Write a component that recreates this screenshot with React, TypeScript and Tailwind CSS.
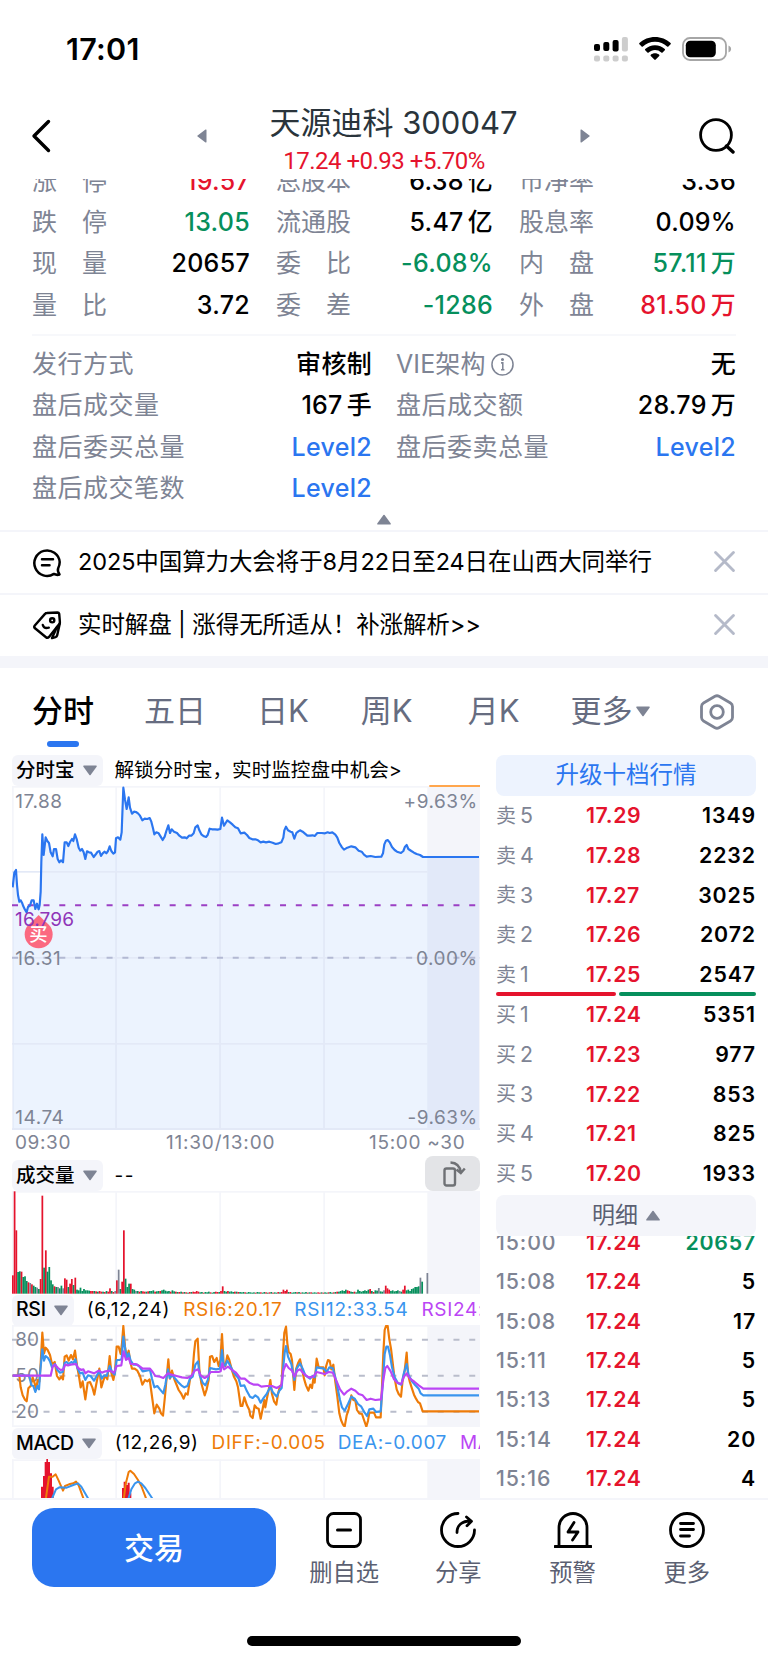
import React from "react";
import clsx from "clsx";

const RED = "#e5132d";
const GREEN = "#068f5c";
const GREY = "#7e8494";

type Cell = { label: string; value: string; tone?: string };

const quotes: Cell[] = [
    { label: "涨停", value: "19.57", tone: "text-[#e5132d]" },
    { label: "总股本", value: "6.38亿" },
    { label: "市净率", value: "3.36" },
    { label: "跌停", value: "13.05", tone: "text-[#068f5c]" },
    { label: "流通股", value: "5.47亿" },
    { label: "股息率", value: "0.09%" },
    { label: "现量", value: "20657" },
    { label: "委比", value: "-6.08%", tone: "text-[#068f5c]" },
    { label: "内盘", value: "57.11万", tone: "text-[#068f5c]" },
    { label: "量比", value: "3.72" },
    { label: "委差", value: "-1286", tone: "text-[#068f5c]" },
    { label: "外盘", value: "81.50万", tone: "text-[#e5132d]" },
];

const extras: Cell[] = [
    { label: "发行方式", value: "审核制" },
    { label: "VIE架构", value: "无" },
    { label: "盘后成交量", value: "167手" },
    { label: "盘后成交额", value: "28.79万" },
    { label: "盘后委买总量", value: "Level2", tone: "text-[#2b76f0]" },
    { label: "盘后委卖总量", value: "Level2", tone: "text-[#2b76f0]" },
    { label: "盘后成交笔数", value: "Level2", tone: "text-[#2b76f0]" },
];

const asks = [
    ["卖", "5", "17.29", "1349"],
    ["卖", "4", "17.28", "2232"],
    ["卖", "3", "17.27", "3025"],
    ["卖", "2", "17.26", "2072"],
    ["卖", "1", "17.25", "2547"],
];

const bids = [
    ["买", "1", "17.24", "5351"],
    ["买", "2", "17.23", "977"],
    ["买", "3", "17.22", "853"],
    ["买", "4", "17.21", "825"],
    ["买", "5", "17.20", "1933"],
];

const trades = [
    ["15:00", "17.24", "20657"],
    ["15:08", "17.24", "5"],
    ["15:08", "17.24", "17"],
    ["15:11", "17.24", "5"],
    ["15:13", "17.24", "5"],
    ["15:14", "17.24", "20"],
    ["15:16", "17.24", "4"],
];

// Chart series use a grid of three units per pixel.
const pricePath =
    "38,427 43,383 48,375 51,420 54,450 58,470 62,466 66,473 70,484 75,494 80,502 84,486 90,482 95,466 101,466 106,492 111,476 116,493 119,480 122,440 124,350 127,268 131,330 137,277 142,288 147,294 152,322 158,334 162,312 168,312 173,342 178,352 183,346 189,352 194,292 200,292 205,303 210,291 216,282 220,288 225,268 230,282 236,308 241,317 246,312 251,322 256,342 261,319 267,322 273,323 281,336 288,327 293,320 298,318 303,333 308,325 314,320 319,325 324,318 329,304 334,318 340,326 345,322 348,280 354,277 361,284 365,262 370,128 375,164 380,192 386,157 390,188 396,206 402,200 408,201 414,205 420,212 427,226 434,221 442,222 449,219 454,230 459,250 463,268 469,262 476,265 482,275 488,285 494,275 499,258 505,241 510,264 515,253 522,260 531,264 538,272 546,278 554,277 560,280 567,272 574,272 581,265 586,247 593,241 598,256 604,268 612,274 618,276 623,270 629,251 636,253 645,253 653,254 661,252 666,218 672,242 677,234 682,226 690,232 698,239 706,247 714,250 722,265 733,263 741,270 748,279 757,283 766,283 774,286 782,292 790,290 798,292 808,290 818,293 827,297 836,295 844,292 850,278 853,256 858,245 864,256 872,260 877,262 883,281 889,264 895,259 900,256 908,260 914,265 922,272 930,272 938,271 944,273 952,264 965,264 975,265 983,262 989,264 997,262 1006,269 1012,278 1018,294 1026,307 1032,314 1042,308 1054,304 1066,307 1076,317 1085,320 1092,329 1100,335 1112,333 1126,336 1144,335 1149,325 1153,298 1158,287 1163,285 1169,292 1176,306 1184,315 1191,320 1203,324 1210,318 1215,305 1220,300 1225,312 1234,318 1242,323 1250,327 1260,330 1269,336 1437,336";

const rsi6 =
    "38,227 58,227 62,262 68,286 75,299 80,304 85,265 92,258 98,232 104,250 108,270 113,240 118,245 122,190 127,98 132,160 137,143 143,150 150,165 156,192 164,186 171,228 178,238 184,230 189,238 194,170 200,166 206,182 213,165 219,178 225,152 231,196 237,230 242,262 248,244 256,298 263,248 270,246 277,262 283,284 290,246 298,206 304,262 310,242 316,226 322,238 329,168 334,218 340,240 345,215 350,140 356,140 362,162 366,130 370,78 375,140 380,172 386,152 391,186 396,206 404,206 412,212 420,228 427,254 435,240 442,244 449,238 455,282 463,340 470,314 478,326 483,340 489,347 495,288 500,232 505,178 510,236 516,212 523,238 530,255 536,270 543,280 551,296 557,280 563,284 570,238 577,224 582,160 586,124 593,116 598,208 604,250 609,268 614,286 620,268 626,240 630,170 636,168 643,186 650,174 656,198 661,180 666,102 671,194 676,198 682,166 688,180 695,208 702,230 709,244 714,262 722,318 727,318 733,292 741,316 748,330 751,347 758,354 764,316 770,324 776,326 782,356 788,326 793,300 796,322 801,294 806,270 811,240 816,282 822,304 829,314 834,282 840,258 845,254 849,160 853,98 858,80 862,130 866,156 872,162 876,180 883,270 888,208 894,190 900,178 906,206 912,236 918,256 925,272 931,254 936,264 940,236 944,248 950,176 956,202 970,202 974,226 978,200 984,180 989,182 994,208 1000,194 1006,246 1012,290 1018,340 1023,360 1029,374 1034,380 1040,346 1046,328 1054,286 1060,300 1066,302 1071,330 1078,340 1086,342 1092,360 1099,380 1104,362 1108,338 1122,338 1128,352 1142,352 1146,260 1150,160 1154,90 1158,78 1163,78 1168,118 1173,146 1177,180 1183,230 1190,268 1196,282 1203,290 1208,240 1214,212 1220,158 1224,222 1229,244 1236,266 1242,284 1248,296 1254,306 1260,310 1268,334 1437,334";

const rsi12 =
    "38,227 88,227 94,256 100,258 106,276 112,258 117,268 121,212 127,148 132,182 137,168 144,174 150,184 156,202 165,192 172,210 180,218 188,216 194,188 200,186 206,192 214,186 220,190 226,178 232,204 240,220 248,218 256,240 264,226 272,228 282,242 290,228 298,212 305,236 312,226 320,228 329,198 336,216 344,224 350,180 358,180 365,178 370,110 376,150 381,176 386,160 392,182 400,194 412,194 420,202 428,214 450,210 456,236 463,262 472,258 480,268 490,280 496,254 504,208 509,234 517,226 526,236 534,246 544,256 553,262 562,258 570,236 578,230 586,194 594,184 599,226 608,248 616,256 624,238 630,204 638,206 648,208 660,206 666,150 671,198 676,196 682,182 690,196 700,216 710,228 716,236 722,258 733,256 741,274 750,290 758,294 766,286 774,292 782,308 792,292 800,282 811,260 818,276 830,290 838,272 845,264 850,200 854,158 858,138 864,170 874,192 883,240 890,206 900,190 908,206 916,226 930,236 938,228 944,232 950,202 972,206 980,216 988,202 998,204 1006,232 1014,270 1020,300 1026,322 1034,332 1044,312 1054,290 1064,296 1074,312 1084,320 1094,338 1101,348 1108,328 1120,326 1128,336 1142,334 1148,256 1154,162 1159,140 1164,140 1170,166 1176,202 1184,232 1194,250 1204,254 1212,218 1220,192 1226,226 1236,244 1246,256 1256,266 1262,280 1270,286 1437,286";

const rsi24 =
    "38,227 152,227 158,200 165,194 174,204 182,210 190,208 196,194 204,196 212,194 228,192 234,204 244,210 250,208 256,220 264,214 282,220 296,212 306,218 316,214 330,212 342,218 350,198 364,196 368,170 371,154 378,180 386,174 392,192 406,192 418,198 428,206 450,206 458,216 466,228 480,230 490,234 504,220 514,224 530,228 546,232 562,234 574,228 584,212 594,208 602,226 614,234 624,228 632,216 656,216 662,214 667,190 672,208 684,200 696,210 708,218 722,236 734,236 748,248 762,254 774,254 784,260 800,258 816,258 830,264 844,256 850,212 858,192 866,204 876,212 883,230 892,212 900,208 912,222 926,232 940,230 950,216 974,222 986,216 998,218 1010,244 1020,268 1032,284 1042,274 1054,266 1066,272 1076,282 1088,286 1100,300 1112,296 1126,300 1143,298 1150,240 1156,204 1162,198 1172,214 1182,238 1192,248 1204,252 1212,230 1220,220 1230,236 1244,246 1256,256 1270,266 1437,266";

// One entry per minute: colour key + height.
const volumes =
    "r55 r307 r190 g65 g67 r66 g50 g52 g38 r34 n32 r28 g24 g20 n18 g14 r44 r294 g78 r130 g66 g80 g40 g28 r22 g20 n20 g16 g24 n16 r46 r42 g20 r30 r44 g26 r48 g12 g10 g18 g8 g14 g10 g10 g9 r8 r8 g8 r7 g6 r8 r6 g6 r5 g8 r6 r16 g8 r5 n8 r40 n72 g14 r36 r190 g45 g20 g30 r30 g14 g12 n8 g8 r6 g8 r7 r6 g6 r7 g8 g8 g10 r6 g7 g8 r8 g10 g12 g9 g7 g8 r6 g10 g7 r6 g5 r5 g6 r4 g5 r4 g3 r5 g5 r6 r5 r8 r6 g4 g5 r3 g5 g4 g6 r4 g3 g5 r6 r5 g5 r8 r22 g8 g6 r8 g6 g7 g5 r6 g6 r5 g5 g4 g5 r4 g3 g5 g4 g3 g4 r3 g5 g4 r4 g3 g5 r4 g3 r4 g5 r3 g4 g3 r5 g4 r5 r12 r8 r12 g5 r5 g3 g4 g5 r4 g5 r3 g4 g3 g5 r3 g4 r4 g3 g4 g3 r4 r3 g4 r3 g4 g3 r4 g5 g3 r4 g5 r6 g6 g8 g10 g8 g12 r10 r8 g6 g5 r6 g4 g12 g8 g6 g8 g10 g8 g12 r14 g8 r5 g10 g9 n17 g7 g6 n10 r24 r16 r12 g8 g10 g7 g8 g10 n8 g6 r12 r24 g10 g12 g8 g14 g16 g20 g20 g22 n48 g36 n0 n0 n62".split(
        " "
    );

function Tri({ className }: { className?: string }) {
    return (
        <svg viewBox="0 0 14 11" className={clsx("h-[11px] w-[14px]", className)} fill={GREY}>
            <path d="M1 .5h12a.8.8 0 0 1 .6 1.200L7.600 10a.8.8 0 0 1-1.200 0L.4 1.700A.8.8 0 0 1 1 .5z" />
        </svg>
    );
}

function StatusBar() {
    return (
        <div className="flex h-[98px] items-center justify-between pl-[66px] pr-9">
            <span className="text-[30.500px] font-semibold leading-none tracking-[0.3px]">17:01</span>
            <div className="flex items-center gap-[11px]">
                <svg viewBox="0 0 34 26" className="h-[26px] w-[34px]">
                    <rect x="0" y="8" width="6" height="7" rx="2" />
                    <rect x="9.300" y="6" width="6" height="9" rx="2" />
                    <rect x="18.600" y="4" width="6" height="11.500" rx="2" />
                    <rect x="27.900" y="1" width="6" height="14.500" rx="2" fill="#cdcdcd" />
                    {[0, 9.3, 18.6, 27.9].map((x) => (
                        <rect key={x} x={x} y="19.500" width="6" height="6" rx="2" fill="#cdcdcd" />
                    ))}
                </svg>
                <svg viewBox="0 0 32 24" className="h-6 w-8">
                    <path d="M16 0c6 0 11.500 2.300 15.600 6 .4.4.4.9 0 1.300l-2.200 2.200c-.4.4-.9.4-1.300 0A17.500 17.500 0 0 0 16 4.800 17.500 17.500 0 0 0 3.900 9.500c-.4.4-.9.4-1.300 0L.4 7.300C0 6.900 0 6.400.4 6 4.500 2.300 10 0 16 0z" />
                    <path d="M16 8.200c3.800 0 7.200 1.400 9.800 3.800.4.4.4.9 0 1.300l-2.200 2.200c-.4.4-.9.4-1.300 0A9.500 9.500 0 0 0 16 13.100c-2.400 0-4.600.9-6.300 2.400-.4.4-.9.4-1.300 0l-2.200-2.200c-.4-.4-.4-.9 0-1.300A14.300 14.300 0 0 1 16 8.200z" />
                    <path d="M16 16.200c1.600 0 3 .5 4.200 1.500.4.4.4.9 0 1.300l-3.500 3.600c-.4.4-1 .4-1.400 0L11.800 19c-.4-.4-.4-.9 0-1.300 1.200-1 2.600-1.500 4.200-1.500z" />
                </svg>
                <svg viewBox="0 0 50 24" className="h-6 w-[50px]">
                    <rect x="1" y="1" width="43" height="22" rx="7" fill="none" stroke="#a6a6a6" strokeWidth="1.800" />
                    <rect x="3.800" y="3.800" width="30" height="16.400" rx="4.500" />
                    <path d="M46.500 8.500c1.800.7 2.600 2 2.600 3.500s-.8 2.800-2.600 3.500z" fill="#a6a6a6" />
                </svg>
            </div>
        </div>
    );
}

function Header() {
    return (
        <div className="flex h-[81px] items-center pl-[31px] pr-[33px]">
            <svg viewBox="0 0 20 34" className="mt-[-5px] h-[34px] w-5" fill="none" stroke="#000" strokeWidth="3.400" strokeLinecap="round" strokeLinejoin="round">
                <path d="M17.500 2.500 3 17l14.500 14.500" />
            </svg>
            <svg viewBox="0 0 10 14" className="ml-[146px] mt-[-5px] h-[14px] w-[10px]" fill={GREY}>
                <path d="M9.500 1v12a.6.6 0 0 1-1 .4L.6 7.600a.8.8 0 0 1 0-1.200L8.500.6a.6.6 0 0 1 1 .4z" />
            </svg>
            <div className="flex flex-1 flex-col items-center">
                <div className="mt-[4px] whitespace-nowrap text-[31px] leading-[40px] text-[#2a343b]">天源迪科 300047</div>
                <div className="mr-[19px] whitespace-nowrap font-[Roboto] text-[24px] leading-[36px] tracking-[-0.5px] text-[#e5132d]">
                    17.24 +0.93 +5.70%
                </div>
            </div>
            <svg viewBox="0 0 10 14" className="mr-[109px] mt-[-5px] h-[14px] w-[10px]" fill={GREY}>
                <path d="M.5 1v12a.6.6 0 0 0 1 .4l7.900-5.800a.8.8 0 0 0 0-1.200L1.500.6a.6.6 0 0 0-1 .4z" />
            </svg>
            <svg viewBox="0 0 36 36" className="mt-[-5px] size-9" fill="none" stroke="#000" strokeWidth="2.800" strokeLinecap="round">
                <circle cx="17" cy="17" r="15.400" />
                <path d="m27.500 28 6.500 6" strokeWidth="3.400" />
            </svg>
        </div>
    );
}

// Splits a trailing CJK unit off the number so it gets its own gap.
function Value({ cell }: { cell: Cell }) {
    const unit = cell.value.match(/^([\d.]+)([^\d.%]+)$/);
    return (
        <span className={clsx("flex items-center gap-[4px] font-medium tracking-[0.3px]", cell.tone)}>
            {unit ? (
                <>
                    <span>{unit[1]}</span>
                    <span>{unit[2]}</span>
                </>
            ) : (
                cell.value
            )}
        </span>
    );
}

function Stats() {
    return (
        <div className="h-[353px] overflow-hidden border-b-2 border-[#f4f5fa] px-8">
            <div className="mt-[-18px] grid grid-cols-[218px_217px_217px] gap-x-[26px]">
                {quotes.map((q) => (
                    <div key={q.label} className="flex h-[41.300px] items-center justify-between text-[25px]">
                        <span className="flex w-[75px] justify-between text-[#7e8494]">
                            {q.label.split("").map((ch) => (
                                <span key={ch}>{ch}</span>
                            ))}
                        </span>
                        <Value cell={q} />
                    </div>
                ))}
            </div>
            <div className="mt-[8px] h-[2px] bg-[#f7f8fb]" />
            <div className="mt-[8px] grid grid-cols-2 gap-x-[24px]">
                {extras.map((q) => (
                    <div key={q.label} className="flex h-[41.300px] items-center justify-between text-[25px]">
                        <span className="flex items-center gap-[5px] tracking-[0.5px] text-[#7e8494]">
                            {q.label === "VIE架构" ? <span className="tracking-[0.1px]">{q.label}</span> : q.label}
                            {q.label === "VIE架构" && (
                                <svg viewBox="0 0 24 24" className="size-[23px]" fill="none" stroke={GREY} strokeWidth="1.600">
                                    <circle cx="12" cy="12" r="11" />
                                    <path d="M10.500 10.300H12.300V17.500M10.500 17.500h3.500" />
                                    <circle cx="12" cy="6.800" r=".8" fill={GREY} />
                                </svg>
                            )}
                        </span>
                        <Value cell={q} />
                    </div>
                ))}
            </div>
            <Tri className="mx-auto mt-[5px] rotate-180" />
        </div>
    );
}

function Notice({ icon, text }: { icon: React.ReactNode; text: string }) {
    return (
        <div className="flex h-[61px] items-center px-[33px] pb-[2px]">
            {icon}
            <span className="ml-[17px] flex-1 whitespace-nowrap text-[23.500px] tracking-[-0.1px]">{text}</span>
            <svg viewBox="0 0 20 20" className="size-[21px]" fill="none" stroke="#b5bac9" strokeWidth="2.700" strokeLinecap="round">
                <path d="m1.500 1.500 17 17M18.500 1.500l-17 17" />
            </svg>
        </div>
    );
}

function Notices() {
    return (
        <div className="border-b-[12px] border-[#f4f5fa]">
            <Notice
                text="2025中国算力大会将于8月22日至24日在山西大同举行"
                icon={
                    <svg viewBox="0 0 28 28" className="size-7 overflow-visible" fill="none" stroke="#000" strokeWidth="2.500" strokeLinecap="round" strokeLinejoin="round">
                        <path d="M26.500 26.500c-2 .7-4 .3-5.600-.6A12.700 12.700 0 1 1 26.700 14c0 2.400-.6 4.300-1.500 6.200-.8 1.700-.6 3.200 1.300 6.300z" />
                        <path d="M9 11.300h11M9 17.200h7.500" />
                    </svg>
                }
            />
            <div className="h-[2px] bg-[#f4f5fa]" />
            <Notice
                text="实时解盘 | 涨得无所适从！补涨解析>>"
                icon={
                    <svg viewBox="0 0 28 28" className="size-7 overflow-visible" fill="none" stroke="#000" strokeWidth="2.400" strokeLinecap="round" strokeLinejoin="round">
                        <path d="M13.800 2 24.500 1.500c1 0 1.500.5 1.700 1.300l.7 8.400c0 .8-.2 1.300-.6 1.800L16 25.900c-.9 1-2 1.100-3 .3L2 17.300c-.9-.8-1-1.800-.2-2.800L12 2.900c.5-.6 1.100-.9 1.800-.9z" />
                        <path d="m26.800 12.500-2.600 11.800c-.2.9-.8 1.500-1.700 1.800l-3.500 1 5-11" />
                        <circle cx="19.200" cy="9.300" r="2.100" />
                        <path d="M9.800 14c.8 2.600 3.200 3.500 6 2.700" />
                    </svg>
                }
            />
        </div>
    );
}

function Tabs() {
    return (
        <div className="flex h-[87px] items-center pl-8 pr-[34px] text-[31px] text-[#666c80]">
            <div className="flex flex-1 gap-[51px] whitespace-nowrap">
                <span className="relative -mr-px font-medium text-black">
                    分时
                    <span className="absolute bottom-[-12px] left-[15px] h-[6px] w-8 rounded-full bg-[#2b76f0]" />
                </span>
                <span>五日</span>
                <span>日K</span>
                <span className="ml-px">周K</span>
                <span className="ml-[4px]">月K</span>
                <span className="flex items-center gap-[4px]">
                    更多
                    <Tri />
                </span>
            </div>
            <svg viewBox="0 0 34 36" className="h-9 w-[34px]" fill="none" stroke={GREY} strokeWidth="2.800" strokeLinejoin="round">
                <path d="M15 2.300a4 4 0 0 1 4 0L30.500 9a4 4 0 0 1 2 3.400v11.200a4 4 0 0 1-2 3.400L19 33.700a4 4 0 0 1-4 0L3.500 27a4 4 0 0 1-2-3.400V12.400a4 4 0 0 1 2-3.400z" />
                <circle cx="17" cy="18" r="6.300" />
            </svg>
        </div>
    );
}

function Pill({ children }: { children: React.ReactNode }) {
    return (
        <div className="flex h-[31px] shrink-0 items-center gap-[8px] rounded-md bg-[#f4f5fa] pl-[4px] pr-[6px] text-[19.500px] font-medium tracking-normal">
            {children}
            <Tri />
        </div>
    );
}

function Grid({ top, height }: { top: number; height: number }) {
    return (
        <g fill="#f4f5fa">
            <rect x="1282" y={top} width="158" height={height} />
            {[36, 346, 658, 970].map((x) => (
                <rect key={x} x={x} y={top} width="5" height={height} />
            ))}
            <rect x="36" y={top} width="1404" height="5" />
        </g>
    );
}

function PriceChart() {
    return (
        <svg viewBox="36 120 1404 1035" className="h-[345px] w-[468px]" fontSize="57" fill={GREY} letterSpacing="1.500">
            <Grid top={123} height={1032} />
            <polygon points={`38,1155 ${pricePath} 1437,1155`} fill="#2b76f0" fillOpacity="0.09" />
            <g fill="#e3e9f7">
                <rect x="36" y="378" width="1246" height="5" />
                <rect x="36" y="636" width="1404" height="5" />
                <rect x="36" y="894" width="1246" height="5" />
                <rect x="36" y="1149" width="1404" height="6" />
                {[346, 658, 970].map((x) => (
                    <rect key={x} x={x} y="383" width="5" height="772" />
                ))}
            </g>
            <path d="M36 638.500H1437" stroke="#b3b9d3" strokeWidth="6" strokeDasharray="18 29.300" />
            <path d="M36 481H1430" stroke="#9b3fc4" strokeWidth="6" strokeDasharray="18 29.300" />
            <rect x="1288" y="119" width="152" height="7" fill="#ffa64d" />
            <polyline points={pricePath} fill="none" stroke="#2b76f0" strokeWidth="6.500" strokeLinejoin="round" />
            <g>
                <path d="m116 510 20 20H96z" fill="#fb6980" />
                <circle cx="116" cy="568" r="42" fill="#fb6980" />
                <text x="116" y="588" fontSize="55" fill="#fff" textAnchor="middle" fontWeight="500">
                    买
                </text>
            </g>
            <text x="46" y="190">17.88</text>
            <text x="1433" y="190" textAnchor="end">+9.63%</text>
            <text x="45" y="544" fill="#8f35b8" letterSpacing="0.5">16.796</text>
            <text x="46" y="660">16.31</text>
            <text x="1433" y="660" textAnchor="end">0.00%</text>
            <text x="46" y="1136">14.74</text>
            <text x="1433" y="1136" textAnchor="end">-9.63%</text>
        </svg>
    );
}

function VolumeChart() {
    const tones: Record<string, string> = { r: RED, g: GREEN, n: GREY };
    return (
        <svg viewBox="36 153 1404 309" className="h-[103px] w-[468px]">
            <Grid top={153} height={309} />
            {volumes.map((v, i) => {
                const h = Number(v.slice(1));
                return <rect key={i} x={36 + i * 5.203} y={461 - h} width="5.200" height={h} fill={tones[v[0]]} />;
            })}
        </svg>
    );
}

function RsiChart() {
    return (
        <svg viewBox="36 75 1404 306" className="h-[102px] w-[468px]" fontSize="57" fill={GREY}>
            <Grid top={75} height={306} />
            <rect x="36" y="376" width="1404" height="5" fill="#f4f5fa" />
            {[119, 227, 335].map((y) => (
                <path key={y} d={`M36 ${y}H1430`} stroke="#b9bdcb" strokeWidth="6" strokeDasharray="18 29.300" />
            ))}
            <text x="46" y="139">80</text>
            <text x="46" y="247">50</text>
            <text x="46" y="355">20</text>
            <g fill="none" strokeWidth="6.500" strokeLinejoin="round">
                <polyline points={rsi6} stroke="#ee7b08" />
                <polyline points={rsi12} stroke="#3a95ee" />
                <polyline points={rsi24} stroke="#bb45f5" />
            </g>
        </svg>
    );
}

function MacdChart() {
    return (
        <svg viewBox="36 477 1404 117" className="h-[39px] w-[468px]">
            <Grid top={478} height={120} />
            <path
                fill={RED}
                d="M123 600V560h6V528h5V486h5V477h5V486h6V520h6V560h5v40zM366 600V564h5V545h8V555h4V548h6V580h5v20z"
            />
            <g fill="none" strokeWidth="6" strokeLinejoin="round">
                <path d="M137 600 147 530 158 530 167 523 176 542 189 572 195 558 207 553 220 550 228 545 236 556 252 600" stroke="#ee7b08" />
                <path d="M154 600 168 568 178 562 200 563 220 555 234 550 244 560 267 600" stroke="#3a95ee" />
                <path d="M371 600 377 552 386 516 391 512 402 522 414 540 424 558 440 600" stroke="#ee7b08" />
                <path d="M384 600 394 568 405 550 414 545 424 550 436 564 460 600" stroke="#3a95ee" />
            </g>
        </svg>
    );
}

function Charts() {
    return (
        <div className="flex w-[468px] flex-col overflow-hidden">
            <div className="flex h-[30px] items-center gap-[12px] whitespace-nowrap pt-px text-[19.600px]">
                <Pill>分时宝</Pill>
                <span>解锁分时宝，实时监控盘中机会&gt;</span>
            </div>
            <PriceChart />
            <div className="flex h-[26px] text-[19px] leading-[25px] tracking-[0.6px] text-[#7e8494]">
                <span className="w-[154px] pl-[3px]">09:30</span>
                <span className="flex-1 tracking-[0.8px]">11:30/13:00</span>
                <span className="w-[111px] whitespace-nowrap tracking-[0.7px]">15:00 ~30</span>
            </div>
            <div className="flex h-[35px] items-end gap-[12px] text-[19px]">
                <Pill>成交量</Pill>
                <span className="flex-1 leading-[30px] tracking-[1.500px]">--</span>
                <div className="flex h-[35px] w-[55px] items-center justify-center rounded-lg bg-[#e3e4e7]">
                    <svg viewBox="0 0 24 26" className="mr-[-2px] h-[26px] w-6" fill="none" stroke="#6f7175" strokeWidth="2.400">
                        <rect x="2.500" y="7.500" width="10.500" height="17" rx="2" />
                        <path d="M8.500 1.500C14 1.700 18 5 18.800 11.500M14.500 8.500l4.300 3.500 4-4.500" />
                    </svg>
                </div>
            </div>
            <VolumeChart />
            <div className="flex h-[31px] items-center gap-[13px] whitespace-nowrap pt-px text-[19px] tracking-[0.7px]">
                <Pill>
                    <span className="tracking-[-0.3px]">RSI</span>
                </Pill>
                <span>(6,12,24)</span>
                <span className="text-[#ee7b08]">RSI6:20.17</span>
                <span className="-ml-px text-[#3a95ee]">RSI12:33.54</span>
                <span className="text-[#bb45f5]">RSI24:42.06</span>
            </div>
            <RsiChart />
            <div className="flex h-[32px] items-center gap-[13px] whitespace-nowrap pt-px text-[19px] tracking-[0.6px]">
                <Pill>
                    <span className="tracking-[-0.4px]">MACD</span>
                </Pill>
                <span>(12,26,9)</span>
                <span className="text-[#ee7b08]">DIFF:-0.005</span>
                <span className="-ml-px text-[#3a95ee]">DEA:-0.007</span>
                <span className="text-[#bb45f5]">MACD:0.004</span>
            </div>
            <MacdChart />
        </div>
    );
}

function Level({ row }: { row: string[] }) {
    return (
        <div className="flex h-[39.800px] items-center text-[21.300px] tracking-[0.6px]">
            <span className="flex w-[90px] items-center gap-[4px] text-[#7e8494]">
                <span className="text-[20px] tracking-normal">{row[0]}</span>
                {row[1]}
            </span>
            <span className="flex-1 font-semibold text-[#e5132d]">{row[2]}</span>
            <span className="font-semibold tracking-[0.9px]">{row[3]}</span>
        </div>
    );
}

function OrderBook() {
    return (
        <div className="flex h-[743px] w-[260px] flex-col overflow-hidden">
            <div className="flex h-[41px] shrink-0 items-center justify-center rounded-lg bg-[#edf3fe] pb-px text-[23.500px] text-[#2b76f0]">升级十档行情</div>
            <div className="h-[199px] shrink-0">
                {asks.map((r) => (
                    <Level key={r[2]} row={r} />
                ))}
            </div>
            <div className="-mt-[3px] flex h-[4px] shrink-0 gap-[3px]">
                <div className="w-[120px] rounded-full bg-[#e5132d]" />
                <div className="flex-1 rounded-full bg-[#068f5c]" />
            </div>
            <div className="-mt-px h-[200px] shrink-0">
                {bids.map((r) => (
                    <Level key={r[2]} row={r} />
                ))}
            </div>
            <div className="flex h-[41px] shrink-0 items-center justify-center gap-2 rounded-lg bg-[#f4f5fa] text-[23px] text-[#5b6072]">
                明细
                <Tri className="rotate-180" />
            </div>
            <div className="flex-1 overflow-hidden">
                <div className="mt-[-13px]">
                    {trades.map((t, i) => (
                        <div key={i} className="flex h-[39.400px] items-center text-[21.300px] tracking-[0.6px]">
                            <span className="w-[90px] font-medium tracking-[0.9px] text-[#7e8494]">{t[0]}</span>
                            <span className="flex-1 font-semibold text-[#e5132d]">{t[1]}</span>
                            <span className={clsx("font-semibold tracking-[0.8px]", i === 0 && "text-[#068f5c]")}>{t[2]}</span>
                        </div>
                    ))}
                </div>
            </div>
        </div>
    );
}

const actions = [
    {
        label: "删自选",
        icon: (
            <>
                <rect x="1.500" y="1.500" width="33" height="33" rx="6" />
                <path d="M11.500 18h13" strokeWidth="3" />
            </>
        ),
    },
    {
        label: "分享",
        icon: (
            <>
                <path d="M18 1.500A16.500 16.500 0 1 0 34.500 18" />
                <path d="M17 20.500c0-7 5-11.500 13.500-11.500M26.500 5l5 4.200-4.500 4.500" />
            </>
        ),
    },
    {
        label: "预警",
        icon: (
            <>
                <path d="M0 34.500h36" strokeWidth="3" />
                <path d="M4 34V15.500a14 14 0 0 1 28 0V34" />
                <path d="m19 10.500-6 9.500h10l-5.500 8" />
            </>
        ),
    },
    {
        label: "更多",
        icon: (
            <>
                <circle cx="18" cy="18" r="16.500" />
                <path d="M11.500 11.500h13M11.500 17.500h13M11.500 24h9" strokeWidth="2.800" />
            </>
        ),
    },
];

function BottomBar() {
    return (
        <div className="h-[165px] border-t-2 border-[#f4f5fa]">
            <div className="flex pl-8 pr-[24px] pt-[8px]">
                <button className="h-[79px] w-[244px] rounded-[22px] bg-[#2b76f0] pt-[2px] text-[30px] font-medium text-white">交易</button>
                <div className="ml-[11px] grid flex-1 grid-cols-4">
                    {actions.map((a) => (
                        <div key={a.label} className="flex flex-col items-center pt-[4px]">
                            <svg viewBox="-1 0 38 36" className="h-9 w-[38px]" fill="none" stroke="#000" strokeWidth="2.800" strokeLinecap="round" strokeLinejoin="round">
                                {a.icon}
                            </svg>
                            <span className="mt-[7px] whitespace-nowrap text-[23.300px] leading-[35px] text-[#5b6072]">{a.label}</span>
                        </div>
                    ))}
                </div>
            </div>
            <div className="mx-auto mt-[46px] h-[10px] w-[274px] rounded-full bg-black" />
        </div>
    );
}

export default function App() {
    return (
        <div className="h-[1663px] w-[768px] overflow-hidden bg-white font-[Inter,'Noto_Sans_CJK_SC',sans-serif] text-black">
            <StatusBar />
            <Header />
            <Stats />
            <Notices />
            <Tabs />
            <div className="flex h-[743px] gap-4 overflow-hidden pl-3">
                <Charts />
                <OrderBook />
            </div>
            <BottomBar />
        </div>
    );
}
